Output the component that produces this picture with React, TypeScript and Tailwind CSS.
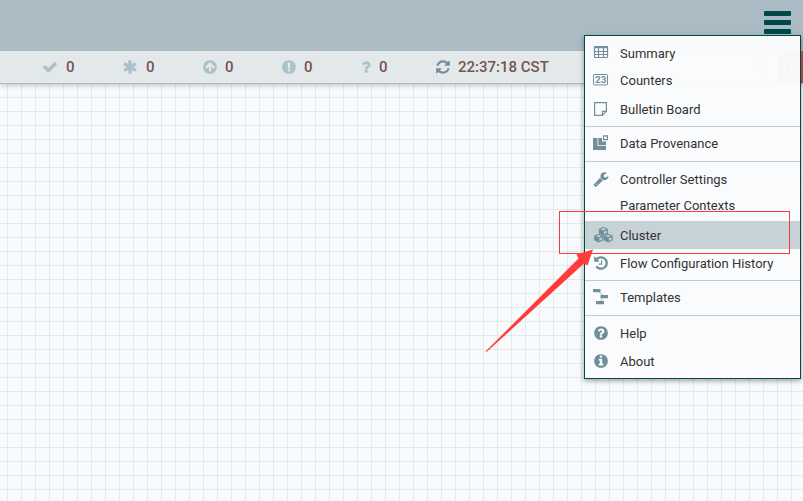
import type { ReactNode } from 'react';

const CIRCLE =
  'M896 128q209 0 385.5 103t279.5 279.5 103 385.5-103 385.5-279.5 279.5-385.5 103-385.5-103-279.5-279.5-103-385.5 103-385.5 279.5-279.5 385.5-103z';

const paths = {
  check:
    'M1671 566q0 40-28 68l-724 724-136 136q-28 28-68 28t-68-28l-136-136-362-362q-28-28-28-68t28-68l136-136q28-28 68-28t68 28l294 295 656-657q28-28 68-28t68 28l136 136q28 28 28 68z',
  asterisk:
    'M1546 1050q46 26 59.5 77.5t-12.5 97.5l-64 110q-26 46-77.5 59.5t-97.5-12.5l-266-153v307q0 52-38 90t-90 38h-128q-52 0-90-38t-38-90v-307l-266 153q-46 26-97.5 12.5t-77.5-59.5l-64-110q-26-46-12.5-97.5t59.5-77.5l266-154-266-154q-46-26-59.5-77.5t12.5-97.5l64-110q26-46 77.5-59.5t97.5 12.5l266 153v-307q0-52 38-90t90-38h128q52 0 90 38t38 90v307l266-153q46-26 97.5-12.5t77.5 59.5l64 110q26 46 12.5 97.5t-59.5 77.5l-266 154z',
  arrowUp:
    CIRCLE +
    'M1412 895q0-27-18-45l-362-362-91-91q-18-18-45-18t-45 18l-91 91-362 362q-18 18-18 45t18 45l91 91q18 18 45 18t45-18l189-189v502q0 26 19 45t45 19h128q26 0 45-19t19-45v-502l189 189q19 19 45 19t45-19l91-91q18-18 18-45z',
  exclamation:
    CIRCLE +
    'M1024 1375v-190q0-14-9-23.5t-22-9.5h-192q-13 0-23 10t-10 23v190q0 13 10 23t23 10h192q13 0 22-9.5t9-23.5zm-2-344l18-621q0-12-10-18-10-8-24-8h-220q-14 0-24 8-10 6-10 18l17 621q0 10 10 17.5t24 7.5h185q14 0 23.5-7.5t10.5-17.5z',
  question:
    'M1088 1256v240q0 16-12 28t-28 12h-240q-16 0-28-12t-12-28v-240q0-16 12-28t28-12h240q16 0 28 12t12 28zm316-600q0 54-15.5 101t-35 76.5-55 59.5-57.5 43.5-61 35.5q-41 23-68.5 65t-27.5 67q0 17-12 32.5t-28 15.5h-240q-15 0-25.5-18.5t-10.5-37.5v-45q0-83 65-156.5t143-108.5q59-27 84-56t25-76q0-42-46.5-74t-107.5-32q-65 0-108 29-35 25-107 115-13 16-31 16-12 0-25-8l-164-125q-13-10-15.5-25t5.5-28q160-266 464-266 80 0 161 31t146 83 106 127.5 41 158.5z',
  refresh:
    'M1639 1056q0 5-1 7-64 268-268 434.5t-478 166.5q-146 0-282.5-55t-243.5-157l-129 129q-19 19-45 19t-45-19-19-45v-448q0-26 19-45t45-19h448q26 0 45 19t19 45-19 45l-137 137q71 66 161 102t187 36q134 0 250-65t186-179q11-17 53-117 8-23 30-23h192q13 0 22.5 9.5t9.5 22.5zm25-800v448q0 26-19 45t-45 19h-448q-26 0-45-19t-19-45 19-45l138-138q-148-137-349-137-134 0-250 65t-186 179q-11 17-53 117-8 23-30 23h-199q-13 0-22.5-9.5t-9.5-22.5v-7q65-268 270-434.5t480-166.5q146 0 284 55.5t245 156.5l130-129q19-19 45-19t45 19 19 45z',
  help:
    CIRCLE +
    'M1024 1376v-192q0-14-9-23t-23-9h-192q-14 0-23 9t-9 23v192q0 14 9 23t23 9h192q14 0 23-9t9-23zm256-672q0-88-55.5-163t-138.5-116-170-41q-243 0-371 213-15 24 8 42l132 100q7 6 19 6 16 0 25-12 53-68 86-92 34-24 86-24 48 0 85.5 26t37.5 59q0 38-20 61t-68 45q-63 28-115.5 86.5t-52.5 125.5v36q0 14 9 23t23 9h192q14 0 23-9t9-23q0-19 21.5-49.5t54.5-49.5q32-18 49-28.5t46-35 44.5-48 28-60.5 12.5-81z',
  info:
    CIRCLE +
    'M1152 1376v-160q0-14-9-23t-23-9h-96v-512q0-14-9-23t-23-9h-320q-14 0-23 9t-9 23v160q0 14 9 23t23 9h96v320h-96q-14 0-23 9t-9 23v160q0 14 9 23t23 9h448q14 0 23-9t9-23zm-128-896v-160q0-14-9-23t-23-9h-192q-14 0-23 9t-9 23v160q0 14 9 23t23 9h192q14 0 23-9t9-23z',
  wrench:
    'M448 1472q0-26-19-45t-45-19-45 19-19 45 19 45 45 19 45-19 19-45zm644-420l-682 682q-37 37-90 37-52 0-91-37l-106-108q-38-36-38-90 0-53 38-91l681-681q39 98 114.5 173.5t173.5 114.5zm634-435q0 39-23 106-47 134-164.5 217.5t-258.5 83.5q-185 0-316.5-131.5t-131.5-316.5 131.5-316.5 316.5-131.5q58 0 121.5 16.5t107.5 46.5q16 11 16 28t-16 28l-293 169v224l193 107q5-3 79-48.5t135.5-81 70.5-35.5q15 0 23.5 10t8.5 25z',
  history:
    'M1664 896q0 156-61 298t-164 245-245 164-298 61q-172 0-327-72.5t-264-204.5q-7-10-6.5-22.5t8.5-20.5l137-138q10-9 25-9 16 2 23 12 73 95 179 147t225 52q104 0 198.5-40.5t163.5-109.5 109.5-163.5 40.5-198.5-40.5-198.5-109.5-163.5-163.5-109.5-198.5-40.5q-98 0-188 35.5t-160 101.5l137 138q31 30 14 69-17 40-59 40h-448q-26 0-45-19t-19-45v-448q0-42 40-59 39-17 69 14l130 129q107-101 244.5-156.5t284.5-55.5q156 0 298 61t245 164 164 245 61 298zm-640-288v448q0 14-9 23t-23 9h-320q-14 0-23-9t-9-23v-64q0-14 9-23t23-9h224v-352q0-14 9-23t23-9h64q14 0 23 9t9 23z',
};

function Glyph({ name }: { name: keyof typeof paths }) {
  return (
    <svg viewBox="0 0 1792 1792" className="block size-4 shrink-0" fill="currentColor" fillRule="evenodd">
      <path d={paths[name]} />
    </svg>
  );
}

function TableIcon() {
  return (
    <svg width="16" height="14" viewBox="0 0 16 14" fill="none" stroke="currentColor">
      <rect x="1.5" y="1.5" width="13" height="11" rx="0.8" strokeWidth="1.2" />
      <path d="M1.5 2.2h13" strokeWidth="2" />
      <path d="M5.5 3v9M10.5 3v9M2 6.5h12M2 9.5h12" strokeWidth="1.1" />
    </svg>
  );
}

function CountersIcon() {
  return (
    <svg width="16" height="14" viewBox="0 0 16 14" fill="none" stroke="currentColor">
      <rect x="0.5" y="1.5" width="14" height="10.4" rx="0.8" />
      <text x="1.9" y="10.1" fontSize="9.8" fontWeight="700" fontFamily="Roboto, sans-serif" fill="currentColor" stroke="none" textLength="11.4">
        23
      </text>
    </svg>
  );
}

function NoteIcon() {
  return (
    <svg width="16" height="14" viewBox="0 0 16 14" fill="none" stroke="currentColor" strokeWidth="1.2">
      <path d="M1.6.6h11.8v8.7l-4 4H1.6zM9.4 13.3v-4h4" />
    </svg>
  );
}

function ProvenanceIcon() {
  return (
    <svg width="16" height="16" viewBox="0 0 16 16" fill="currentColor">
      <path d="M0 3h4.5v8H13v4H0z" />
      <path d="M5.3 3h3.7v3.5h4v3.7H5.3z" />
      <path d="M10.6.8h3.8v3.8h-3.8z" fill="none" stroke="currentColor" strokeWidth="1.2" />
    </svg>
  );
}

function Cube({ x, y }: { x: number; y: number }) {
  return (
    <g transform={`translate(${x} ${y})`}>
      <path d="M4.6 0 8.8 1.7Q9.2 1.9 9.2 2.4V6.4L4.6 8.7 0 6.4V2.4Q0 1.9.4 1.7z" fill="currentColor" />
      <path d="M4.6 1.1 7.4 2.3 4.6 3.5 1.8 2.3zM5.2 4.7 8 3.5V5.8L5.2 7.2z" fill="#c7d2d7" />
    </g>
  );
}

function CubesIcon() {
  return (
    <svg width="19" height="16" viewBox="0 0 19 16">
      <Cube x={4.8} y={0} />
      <Cube x={0.1} y={6.8} />
      <Cube x={9.6} y={6.8} />
    </svg>
  );
}

function TemplateIcon() {
  return (
    <svg width="16" height="16" viewBox="0 0 16 16" fill="currentColor">
      <path d="M5 2 11 7 7 13" fill="none" stroke="currentColor" strokeWidth=".6" />
      <path d="M0 0h7.5v3.2H0zM7.5 6H15v3.2H7.5zM3 12h8v3.2H3z" />
    </svg>
  );
}

function Status({ icon, children, className }: { icon: keyof typeof paths; children: ReactNode; className: string }) {
  return (
    <div className={`flex shrink-0 items-center ${className}`}>
      <Glyph name={icon} />
      <span className="text-[#775351]">{children}</span>
    </div>
  );
}

function Item({ icon, label, row = 'pb-0', pad = 'pl-2 pb-px' }: { icon?: ReactNode; label: string; row?: string; pad?: string }) {
  return (
    <div className={`flex h-7 items-center ${row}`}>
      <div className={`flex w-[35px] shrink-0 text-[#728e9b] ${pad}`}>{icon}</div>
      <span className="whitespace-nowrap pt-[2px] text-[#333333]">{label}</span>
    </div>
  );
}

function Divider() {
  return <div className="h-px bg-[#c1cdd3]" />;
}

function Menu() {
  return (
    <div className="absolute left-[584px] top-[35px] z-20 flex h-[344px] w-[217px] flex-col border border-[#004849] bg-[#fafbfd]/98 pt-[3px] text-[13px] leading-[18px] shadow-[0_2px_5px_rgba(0,0,0,0.35)]">
      <Item icon={<TableIcon />} label="Summary" pad="pl-2 pb-[2px]" />
      <Item icon={<CountersIcon />} label="Counters" row="pb-[2px]" pad="pl-2" />
      <Item icon={<NoteIcon />} label="Bulletin Board" />
      <div className="py-[3px]"><Divider /></div>
      <Item icon={<ProvenanceIcon />} label="Data Provenance" row="-mt-px" pad="pl-2" />
      <div className="pb-[3px] pt-1"><Divider /></div>
      <Item icon={<Glyph name="wrench" />} label="Controller Settings" />
      <Item label="Parameter Contexts" row="pb-1" />
      <Item icon={<CubesIcon />} label="Cluster" row="bg-[#c7d2d7]" pad="pl-[9px]" />
      <Item icon={<Glyph name="history" />} label="Flow Configuration History" pad="pl-[7.5px] pb-px" />
      <div className="pb-[2px] pt-[3px]"><Divider /></div>
      <Item icon={<TemplateIcon />} label="Templates" pad="pl-2" />
      <div className="pb-[3px] pt-1"><Divider /></div>
      <Item icon={<Glyph name="help" />} label="Help" pad="pl-[7.5px] pb-px" />
      <Item icon={<Glyph name="info" />} label="About" pad="pl-[7.5px] pb-px" />
    </div>
  );
}

export default function App() {
  return (
    <div className="relative flex h-[501px] w-[803px] flex-col overflow-hidden font-['Roboto',sans-serif]">
      <header className="z-10 flex h-[51px] shrink-0 justify-end bg-[#aabbc3] pr-3 pt-[11px]">
        <div className="flex w-[27px] flex-col gap-[4px]">
          <div className="h-[5px] rounded-[1px] bg-[#004849]" />
          <div className="h-[5px] rounded-[1px] bg-[#004849]" />
          <div className="h-[5px] rounded-[1px] bg-[#004849]" />
        </div>
      </header>
      <div className="z-0 flex h-[33px] shrink-0 items-center border-b border-[#aabbc3] bg-[#e3e8eb] text-[15px] font-medium text-[#acc1ca] shadow-[0_1px_6px_rgba(0,0,0,0.25)]">
        <Status icon="check" className="ml-[42px] w-[80px] gap-[8px]">0</Status>
        <Status icon="asterisk" className="w-[80px] gap-[8px]">0</Status>
        <Status icon="arrowUp" className="w-[79px] gap-[7px]">0</Status>
        <Status icon="exclamation" className="w-[77px] gap-[7px]">0</Status>
        <Status icon="question" className="w-[77px] gap-[5px]">0</Status>
        <div className="flex items-center gap-[7px] text-[#728e9b]">
          <Glyph name="refresh" />
          <span className="whitespace-nowrap text-[#775351]">22:37:18 CST</span>
        </div>
        <div className="ml-auto flex h-full items-center gap-[9px] text-[#728e9b]">
          <svg width="16" height="16" viewBox="0 0 16 16" fill="none" stroke="currentColor" strokeWidth="2">
            <circle cx="6.5" cy="6.5" r="4.5" />
            <path d="m10 10 4.5 4.5" />
          </svg>
          <div className="flex h-full w-[25px] items-center justify-center bg-[#ba554a] text-white">
            <NoteIcon />
          </div>
        </div>
      </div>
      <main className="flex-1 bg-[#f9fafb] bg-[linear-gradient(to_right,#e5e8eb_1px,transparent_1px),linear-gradient(to_bottom,#e5e8eb_1px,transparent_1px)] bg-[size:14px_14px] bg-[position:7px_13px]" />
      <Menu />
      <div className="absolute left-[559px] top-[211px] z-30 h-[43px] w-[231px] border border-[#fb3b3b]" />
      <svg className="absolute left-[480px] top-[240px] z-30" width="120" height="120" viewBox="0 0 120 120">
        <path d="M5.5 111.5 98.5 18.5 96.5 14.5 113 9.5 107.5 25.5 104 23.5 6.5 112z" fill="#ff3b3b" />
      </svg>
    </div>
  );
}
